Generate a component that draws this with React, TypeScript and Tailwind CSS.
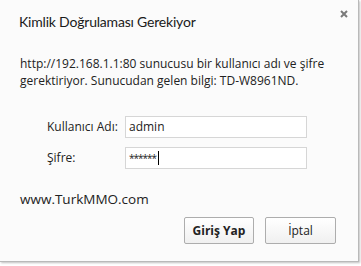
export default function App() {
  return (
    <div className="h-[266px] w-[361px] bg-white font-['Open_Sans',sans-serif] text-[#222]">
      <div className="relative h-[262px] w-[359px] border-r border-b border-[#b9b9b9] bg-[#fbfbfb] shadow-[1px_1px_2px_rgba(0,0,0,0.25)]">
        <button className="absolute right-[10px] top-[10px]">
          <svg width="8" height="8" viewBox="0 0 8 8">
            <path d="M1 1L7 7M7 1L1 7" stroke="#7a7a7a" strokeWidth="2" />
          </svg>
        </button>
        <div className="px-[19px] pt-[12px]">
          <h1 className="font-['Lato',sans-serif] text-[14px] leading-[20px] tracking-[-0.2px] text-[#1a1a1a]">
            Kimlik Doğrulaması Gerekiyor
          </h1>
          <p className="mt-[23px] pl-px text-[12px] leading-[17px]">
            http://192.168.1.1:80 sunucusu bir kullanıcı adı ve şifre
            <br />
            gerektiriyor. Sunucudan gelen bilgi: TD-W8961ND.
          </p>
          <div className="mt-[27px] grid grid-cols-[78px_182px] items-center gap-y-[9px] pl-[28px] text-[12px]">
            <label>Kullanıcı Adı:</label>
            <div className="flex h-[22px] items-center border border-[#d6d6d6] bg-white px-[3px]">admin</div>
            <label>Şifre:</label>
            <div className="flex h-[22px] items-center border border-[#d6d6d6] bg-white px-[3px]">
              <span className="text-[10px] tracking-[-1px]">******</span>
              <span className="ml-[2px] h-[14px] w-px bg-black" />
            </div>
          </div>
          <div className="mt-[22px] pl-px text-[13.5px] leading-[16px]">www.TurkMMO.com</div>
          <div className="mt-[10px] flex justify-end gap-[11px] pr-[3px]">
            <button className="h-[27px] w-[70px] rounded-[2px] border border-[#adadad] bg-gradient-to-b from-white to-[#f0f0f0] text-[12px] font-bold">
              Giriş Yap
            </button>
            <button className="h-[27px] w-[71px] rounded-[2px] border border-[#adadad] bg-gradient-to-b from-white to-[#f0f0f0] text-[12px]">
              İptal
            </button>
          </div>
        </div>
      </div>
    </div>
  );
}
